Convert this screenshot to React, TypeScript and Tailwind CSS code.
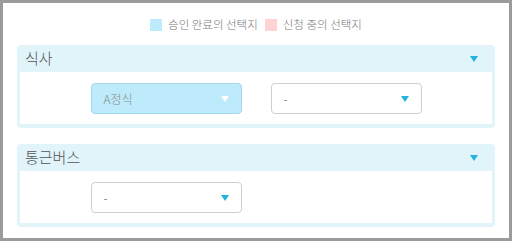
import React from "react";

const font = { fontFamily: '"Noto Sans CJK KR", "Noto Sans", sans-serif' };

function Caret({ color = "#1fb3e0" }: { color?: string }) {
    return (
        <svg width="8" height="6" viewBox="0 0 8 6" className="shrink-0">
            <path d="M0 0 H8 L4 6 Z" fill={color} />
        </svg>
    );
}

function Select({ value, active }: { value: string; active?: boolean }) {
    return (
        <div
            className={
                active
                    ? "flex h-[31px] w-[151px] items-center justify-between rounded-[4px] border border-[#a3d8ea] bg-[#bdebfc] pl-[12px] pr-[12px]"
                    : "flex h-[31px] w-[151px] items-center justify-between rounded-[4px] border border-[#cfcfcf] bg-white pl-[12px] pr-[12px]"
            }
        >
            <span className={active ? "text-[12px] font-light text-[#8a8a8a]" : "text-[12px] font-light text-[#555]"}>{value}</span>
            <Caret color={active ? "#ffffff" : "#1fb3e0"} />
        </div>
    );
}

function Section({ title, children }: { title: string; children: React.ReactNode }) {
    return (
        <div className="rounded-[4px] bg-[#e0f4fa] px-[3px] pb-[4px]">
            <div className="flex h-[27px] items-center justify-between pl-[5px] pr-[14px]">
                <span className="text-[15px] font-light text-[#555]">{title}</span>
                <Caret />
            </div>
            <div className="bg-white pb-[10px] pt-[11px]">
                <div className="mx-auto flex w-[331px] gap-[29px]">{children}</div>
            </div>
        </div>
    );
}

export default function App() {
    return (
        <div className="h-[241px] w-[512px] overflow-hidden border-[3px] border-[#9b9b9b] bg-white" style={font}>
            <div className="flex h-[42px] items-center justify-center gap-[7px] pt-[1px]">
                <div className="flex items-center gap-[6px]">
                    <span className="h-[12px] w-[12px] bg-[#bdebfc]" />
                    <span className="text-[11.5px] font-light text-[#777]">승인 완료의 선택지</span>
                </div>
                <div className="flex items-center gap-[6px]">
                    <span className="h-[12px] w-[12px] bg-[#ffd3d3]" />
                    <span className="text-[11.5px] font-light text-[#777]">신청 중의 선택지</span>
                </div>
            </div>
            <div className="flex flex-col gap-[16px] px-[14px]">
                <Section title="식사">
                    <Select value="A정식" active />
                    <Select value="-" />
                </Section>
                <Section title="통근버스">
                    <Select value="-" />
                </Section>
            </div>
        </div>
    );
}
